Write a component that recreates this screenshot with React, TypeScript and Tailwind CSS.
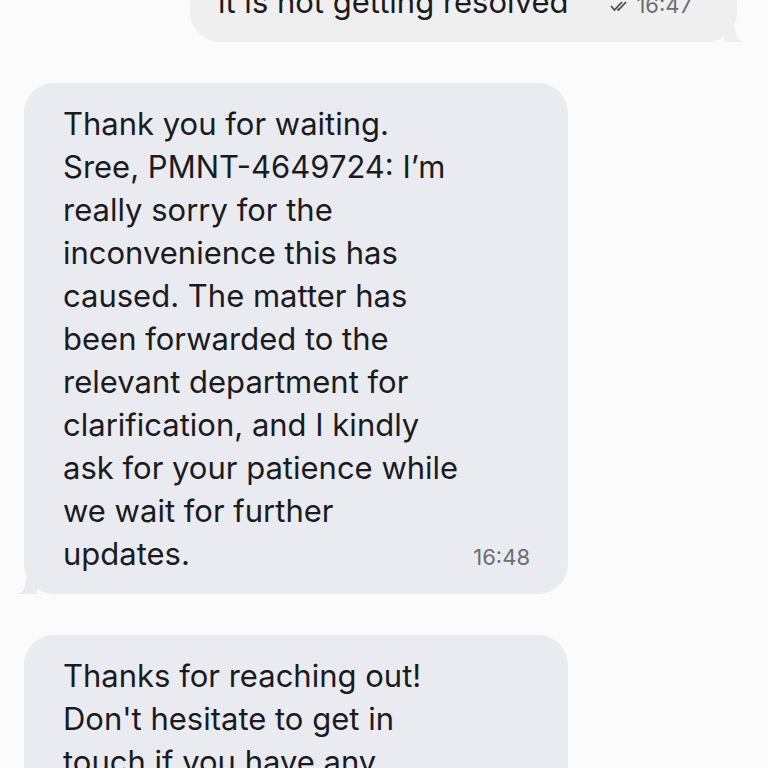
import React from "react";

const font = { fontFamily: "Inter, 'Noto Sans', sans-serif" };

function IncomingTail() {
  return (
    <svg className="absolute left-[-7px] bottom-0" width="20" height="16" viewBox="0 0 20 16">
      <path d="M20 0 L20 16 L0 16 C6 14.5 9 10 9 0 Z" fill="#e9ebf1" />
    </svg>
  );
}

function OutgoingTail() {
  return (
    <svg className="absolute right-[-7px] bottom-0" width="20" height="16" viewBox="0 0 20 16">
      <path d="M0 0 L0 16 L20 16 C14 14.5 11 10 11 0 Z" fill="#efefef" />
    </svg>
  );
}

function Incoming({ lines, time }: { lines: string[]; time?: string }) {
  return (
    <div className="relative ml-[24px] w-[544px] rounded-[30px] bg-[#e9ebf1] pl-[39px] pr-[38px] pt-[19px] pb-[15px]">
      {lines.map((l, i) => {
        const last = i === lines.length - 1;
        if (last && time) {
          return (
            <div key={i} className="flex items-baseline justify-between leading-[43px]">
              <span className="text-[31px] text-[#1b1b1d]">{l}</span>
              <span className="text-[22px] text-[#6c6e73]">{time}</span>
            </div>
          );
        }
        return (
          <div key={i} className="text-[31px] leading-[43px] text-[#1b1b1d] whitespace-nowrap">
            {l}
          </div>
        );
      })}
      <IncomingTail />
    </div>
  );
}

export default function App() {
  return (
    <div className="w-[768px] h-[768px] overflow-hidden bg-[#fbfbfb]" style={font}>
      <div className="ml-[190px] w-[547px] mt-[-40px] relative rounded-[30px] bg-[#efefef] pl-[28px] pr-[45px] pt-[20px] pb-[15px]">
        <div className="flex items-baseline leading-[43px]">
          <span className="text-[31px] text-[#1b1b1d] whitespace-nowrap">it is not getting resolved</span>
          <span className="ml-auto flex items-baseline gap-[4px]">
            <svg width="22" height="12" viewBox="0 0 22 12" className="self-center">
              <path d="M1 6 L4.5 10 L12 2" fill="none" stroke="#4a4c50" strokeWidth="1.8" />
              <path d="M7.5 9 L8.5 10 L16 2" fill="none" stroke="#4a4c50" strokeWidth="1.8" />
            </svg>
            <span className="text-[22px] text-[#6c6e73]">16:47</span>
          </span>
        </div>
        <OutgoingTail />
      </div>

      <div className="mt-[41px]">
        <Incoming
          lines={[
            "Thank you for waiting.",
            "Sree, PMNT-4649724: I’m",
            "really sorry for the",
            "inconvenience this has",
            "caused. The matter has",
            "been forwarded to the",
            "relevant department for",
            "clarification, and I kindly",
            "ask for your patience while",
            "we wait for further",
            "updates.",
          ]}
          time="16:48"
        />
      </div>

      <div className="mt-[41px]">
        <Incoming
          lines={[
            "Thanks for reaching out!",
            "Don't hesitate to get in",
            "touch if you have any",
            "further questions.",
          ]}
        />
      </div>
    </div>
  );
}
